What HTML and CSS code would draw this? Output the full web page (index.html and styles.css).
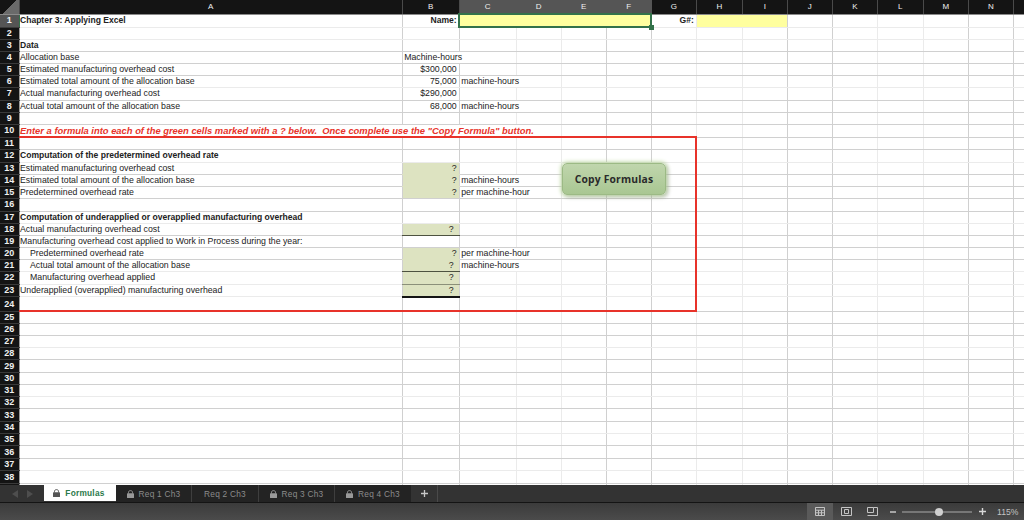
FILE: index.html
```html
<!DOCTYPE html>
<html lang="en">
<head>
    <meta charset="UTF-8">
    <title>Chapter 3: Applying Excel</title>
    <link rel="stylesheet" href="styles.css">
</head>
<body>
    <div class="sheet">
        <table class="grid">
            <colgroup>
                <col class="c-head">
                <col class="c-a"><col class="c-b"><col class="c-c"><col class="c-d"><col class="c-e"><col class="c-f"><col class="c-g">
                <col class="c-h"><col class="c-i"><col class="c-j"><col class="c-k"><col class="c-l"><col class="c-m"><col class="c-n"><col class="c-o">
            </colgroup>
            <tr class="cols">
                <th class="corner"></th>
                <th>A</th><th>B</th><th class="hot">C</th><th class="hot">D</th><th class="hot">E</th><th class="hot">F</th><th>G</th>
                <th>H</th><th>I</th><th>J</th><th>K</th><th>L</th><th>M</th><th>N</th><th></th>
            </tr>
            <tr class="tall soft"><th class="hot">1</th><td class="bold">Chapter 3: Applying Excel</td><td class="bold num">Name:</td><td class="yellow selected" colspan="4"></td><td class="bold num">G#:</td><td class="yellow" colspan="2"></td><td></td><td></td><td></td><td></td><td></td><td></td></tr>
            <tr class="soft"><th>2</th><td></td><td></td><td></td><td></td><td></td><td></td><td></td><td></td><td></td><td></td><td></td><td></td><td></td><td></td><td></td></tr>
            <tr><th>3</th><td class="bold">Data</td><td></td><td></td><td></td><td></td><td></td><td></td><td></td><td></td><td></td><td></td><td></td><td></td><td></td><td></td></tr>
            <tr><th>4</th><td>Allocation base</td><td class="unit" colspan="2">Machine-hours</td><td></td><td></td><td></td><td></td><td></td><td></td><td></td><td></td><td></td><td></td><td></td></tr>
            <tr><th>5</th><td>Estimated manufacturing overhead cost</td><td class="num">$300,000</td><td></td><td></td><td></td><td></td><td></td><td></td><td></td><td></td><td></td><td></td><td></td><td></td><td></td></tr>
            <tr class="soft"><th>6</th><td>Estimated total amount of the allocation base</td><td class="num">75,000</td><td class="unit" colspan="2">machine-hours</td><td></td><td></td><td></td><td></td><td></td><td></td><td></td><td></td><td></td><td></td></tr>
            <tr class="tall"><th>7</th><td>Actual manufacturing overhead cost</td><td class="num">$290,000</td><td></td><td></td><td></td><td></td><td></td><td></td><td></td><td></td><td></td><td></td><td></td><td></td><td></td></tr>
            <tr><th>8</th><td>Actual total amount of the allocation base</td><td class="num">68,000</td><td class="unit" colspan="2">machine-hours</td><td></td><td></td><td></td><td></td><td></td><td></td><td></td><td></td><td></td><td></td></tr>
            <tr><th>9</th><td></td><td></td><td></td><td></td><td></td><td></td><td></td><td></td><td></td><td></td><td></td><td></td><td></td><td></td><td></td></tr>
            <tr class="tall"><th>10</th><td class="note" colspan="4">Enter a formula into each of the green cells marked with a ? below.&nbsp; Once complete use the "Copy Formula" button.</td><td></td><td></td><td></td><td></td><td></td><td></td><td></td><td></td><td></td><td></td><td></td></tr>
            <tr><th>11</th><td></td><td></td><td></td><td></td><td></td><td></td><td></td><td></td><td></td><td></td><td></td><td></td><td></td><td></td><td></td></tr>
            <tr class="tall soft"><th>12</th><td class="bold">Computation of the predetermined overhead rate</td><td></td><td></td><td></td><td></td><td></td><td></td><td></td><td></td><td></td><td></td><td></td><td></td><td></td><td></td></tr>
            <tr><th>13</th><td>Estimated manufacturing overhead cost</td><td class="green num">?</td><td></td><td></td><td></td><td></td><td></td><td></td><td></td><td></td><td></td><td></td><td></td><td></td><td></td></tr>
            <tr><th>14</th><td>Estimated total amount of the allocation base</td><td class="green num">?</td><td class="unit" colspan="2">machine-hours</td><td></td><td></td><td></td><td></td><td></td><td></td><td></td><td></td><td></td><td></td></tr>
            <tr><th>15</th><td>Predetermined overhead rate</td><td class="green num end">?</td><td class="unit" colspan="2">per machine-hour</td><td></td><td></td><td></td><td></td><td></td><td></td><td></td><td></td><td></td><td></td></tr>
            <tr class="tall"><th>16</th><td></td><td></td><td></td><td></td><td></td><td></td><td></td><td></td><td></td><td></td><td></td><td></td><td></td><td></td><td></td></tr>
            <tr class="soft"><th>17</th><td class="bold">Computation of underapplied or overapplied manufacturing overhead</td><td></td><td></td><td></td><td></td><td></td><td></td><td></td><td></td><td></td><td></td><td></td><td></td><td></td><td></td></tr>
            <tr><th>18</th><td>Actual manufacturing overhead cost</td><td class="green num acct rule-dark">?</td><td></td><td></td><td></td><td></td><td></td><td></td><td></td><td></td><td></td><td></td><td></td><td></td><td></td></tr>
            <tr><th>19</th><td>Manufacturing overhead cost applied to Work in Process during the year:</td><td></td><td></td><td></td><td></td><td></td><td></td><td></td><td></td><td></td><td></td><td></td><td></td><td></td><td></td></tr>
            <tr><th>20</th><td class="indent">Predetermined overhead rate</td><td class="green num">?</td><td class="unit" colspan="2">per machine-hour</td><td></td><td></td><td></td><td></td><td></td><td></td><td></td><td></td><td></td><td></td></tr>
            <tr class="soft"><th>21</th><td class="indent">Actual total amount of the allocation base</td><td class="green num acct rule-dark">?</td><td class="unit" colspan="2">machine-hours</td><td></td><td></td><td></td><td></td><td></td><td></td><td></td><td></td><td></td><td></td></tr>
            <tr class="tall soft"><th>22</th><td class="indent">Manufacturing overhead applied</td><td class="green num acct rule-mid">?</td><td></td><td></td><td></td><td></td><td></td><td></td><td></td><td></td><td></td><td></td><td></td><td></td><td></td></tr>
            <tr class="soft"><th>23</th><td>Underapplied (overapplied) manufacturing overhead</td><td class="green num acct rule-thick">?</td><td></td><td></td><td></td><td></td><td></td><td></td><td></td><td></td><td></td><td></td><td></td><td></td><td></td></tr>
            <tr class="row-24"><th>24</th><td></td><td></td><td></td><td></td><td></td><td></td><td></td><td></td><td></td><td></td><td></td><td></td><td></td><td></td><td></td></tr>
            <tr><th>25</th><td></td><td></td><td></td><td></td><td></td><td></td><td></td><td></td><td></td><td></td><td></td><td></td><td></td><td></td><td></td></tr>
            <tr><th>26</th><td></td><td></td><td></td><td></td><td></td><td></td><td></td><td></td><td></td><td></td><td></td><td></td><td></td><td></td><td></td></tr>
            <tr class="soft"><th>27</th><td></td><td></td><td></td><td></td><td></td><td></td><td></td><td></td><td></td><td></td><td></td><td></td><td></td><td></td><td></td></tr>
            <tr><th>28</th><td></td><td></td><td></td><td></td><td></td><td></td><td></td><td></td><td></td><td></td><td></td><td></td><td></td><td></td><td></td></tr>
            <tr class="tall"><th>29</th><td></td><td></td><td></td><td></td><td></td><td></td><td></td><td></td><td></td><td></td><td></td><td></td><td></td><td></td><td></td></tr>
            <tr><th>30</th><td></td><td></td><td></td><td></td><td></td><td></td><td></td><td></td><td></td><td></td><td></td><td></td><td></td><td></td><td></td></tr>
            <tr class="soft"><th>31</th><td></td><td></td><td></td><td></td><td></td><td></td><td></td><td></td><td></td><td></td><td></td><td></td><td></td><td></td><td></td></tr>
            <tr><th>32</th><td></td><td></td><td></td><td></td><td></td><td></td><td></td><td></td><td></td><td></td><td></td><td></td><td></td><td></td><td></td></tr>
            <tr class="tall"><th>33</th><td></td><td></td><td></td><td></td><td></td><td></td><td></td><td></td><td></td><td></td><td></td><td></td><td></td><td></td><td></td></tr>
            <tr class="soft"><th>34</th><td></td><td></td><td></td><td></td><td></td><td></td><td></td><td></td><td></td><td></td><td></td><td></td><td></td><td></td><td></td></tr>
            <tr><th>35</th><td></td><td></td><td></td><td></td><td></td><td></td><td></td><td></td><td></td><td></td><td></td><td></td><td></td><td></td><td></td></tr>
            <tr class="tall"><th>36</th><td></td><td></td><td></td><td></td><td></td><td></td><td></td><td></td><td></td><td></td><td></td><td></td><td></td><td></td><td></td></tr>
            <tr class="soft"><th>37</th><td></td><td></td><td></td><td></td><td></td><td></td><td></td><td></td><td></td><td></td><td></td><td></td><td></td><td></td><td></td></tr>
            <tr class="tall"><th>38</th><td></td><td></td><td></td><td></td><td></td><td></td><td></td><td></td><td></td><td></td><td></td><td></td><td></td><td></td><td></td></tr>
            <tr><th></th><td></td><td></td><td></td><td></td><td></td><td></td><td></td><td></td><td></td><td></td><td></td><td></td><td></td><td></td><td></td></tr>
        </table>
        <div class="red-box"></div>
        <div class="copy-btn">Copy Formulas</div>
    </div>

    <div class="tabbar">
        <div class="tab-nav">
            <svg width="6" height="8" viewBox="0 0 6 8"><path d="M6 0V8L0 4Z" fill="#4e4e4e"/></svg>
            <svg width="6" height="8" viewBox="0 0 6 8"><path d="M0 0V8L6 4Z" fill="#4e4e4e"/></svg>
        </div>
        <div class="tab tab-active">
            <svg class="lock" viewBox="0 0 7 8"><path d="M1.5 3.5V2.3C1.5 1.2 2.4.6 3.5.6S5.5 1.2 5.5 2.3V3.5" fill="none" stroke="#555" stroke-width="1"/><rect y="3.3" width="7" height="4.7" rx=".6" fill="#555"/></svg>
            Formulas
        </div>
        <div class="tab tab-1">
            <svg class="lock" viewBox="0 0 7 8"><path d="M1.5 3.5V2.3C1.5 1.2 2.4.6 3.5.6S5.5 1.2 5.5 2.3V3.5" fill="none" stroke="#999" stroke-width="1"/><rect y="3.3" width="7" height="4.7" rx=".6" fill="#999"/></svg>
            Req 1 Ch3
        </div>
        <div class="tab tab-2">Req 2 Ch3</div>
        <div class="tab tab-3">
            <svg class="lock" viewBox="0 0 7 8"><path d="M1.5 3.5V2.3C1.5 1.2 2.4.6 3.5.6S5.5 1.2 5.5 2.3V3.5" fill="none" stroke="#999" stroke-width="1"/><rect y="3.3" width="7" height="4.7" rx=".6" fill="#999"/></svg>
            Req 3 Ch3
        </div>
        <div class="tab tab-4">
            <svg class="lock" viewBox="0 0 7 8"><path d="M1.5 3.5V2.3C1.5 1.2 2.4.6 3.5.6S5.5 1.2 5.5 2.3V3.5" fill="none" stroke="#999" stroke-width="1"/><rect y="3.3" width="7" height="4.7" rx=".6" fill="#999"/></svg>
            Req 4 Ch3
        </div>
        <div class="tab-add">
            <svg width="7" height="7" viewBox="0 0 7 7"><path d="M3.5 0V7M0 3.5H7" stroke="#c8c8c8" stroke-width="1.3"/></svg>
        </div>
    </div>

    <div class="statusbar">
        <div class="view view-on">
            <svg width="10" height="9" viewBox="0 0 10 9" fill="none" stroke="#c4c4c4"><path d="M.5.5H9.5V8.5H.5ZM.5 3.2H9.5M.5 5.8H9.5M3.5 3.2V8.5M6.5 3.2V8.5"/></svg>
        </div>
        <div class="view">
            <svg width="11" height="9" viewBox="0 0 11 9" fill="none" stroke="#c4c4c4"><path d="M.5.5H10.5V8.5H.5ZM3.5 2.5H7.5V6.5H3.5Z"/></svg>
        </div>
        <div class="view">
            <svg width="11" height="9" viewBox="0 0 11 9" fill="none" stroke="#c4c4c4"><path d="M.5 5.5V.5H6.5M6.5 .5V5.5H.5M.5 8.5H10.5V.5H6.5"/></svg>
        </div>
        <svg class="zoom-minus" width="6" height="2" viewBox="0 0 6 2"><path d="M0 1H6" stroke="#d0d0d0" stroke-width="1.4"/></svg>
        <div class="slider"><div class="thumb"></div></div>
        <svg class="zoom-plus" width="7" height="7" viewBox="0 0 7 7"><path d="M3.5 0V7M0 3.5H7" stroke="#d8d8d8" stroke-width="1.4"/></svg>
        <div class="zoom-pct">115%</div>
    </div>
</body>
</html>
```

FILE: styles.css
```css
:root {
    --line: #d0d0d0;
    --line-soft: #ebebeb;
    --head: #141414;
    --head-hot: #555;
    --green-cell: #dde3c1;
    --yellow-cell: #ffff9f;
}

html, body {
    margin: 0;
    height: 100%;
    overflow: hidden;
    background: #333;
}

body {
    font-family: "Liberation Sans", Arial, sans-serif;
}

.sheet {
    position: relative;
    height: 485px;
    overflow: hidden;
    background: white;
}

.grid {
    border-collapse: collapse;
    table-layout: fixed;
    width: 1040px;
    font-size: 8.75px;
    line-height: 11px;
    color: #222;
}

/* column widths and gridline shades */
.c-head { width: 19px; }
.c-a { width: 383px; border-right: 1px solid var(--line); }
.c-b { width: 57px; border-right: 1px solid var(--line); }
.c-c { width: 57px; border-right: 1px solid var(--line-soft); }
.c-d { width: 45px; border-right: 1px solid var(--line-soft); }
.c-e { width: 45px; border-right: 1px solid var(--line); }
.c-f { width: 45px; border-right: 1px solid var(--line); }
.c-g { width: 45px; border-right: 1px solid var(--line-soft); }
.c-h { width: 46px; border-right: 1px solid var(--line-soft); }
.c-i { width: 45px; border-right: 1px solid var(--line); }
.c-j { width: 45px; border-right: 1px solid var(--line); }
.c-k { width: 45px; border-right: 1px solid var(--line-soft); }
.c-l { width: 46px; border-right: 1px solid var(--line-soft); }
.c-m { width: 45px; border-right: 1px solid var(--line); }
.c-n { width: 45px; border-right: 1px solid var(--line); }
.c-o { width: 26px; }

tr {
    height: 12px;
    border-bottom: 1px solid var(--line);
}

tr.tall { height: 13px; }
tr.soft { border-bottom-color: var(--line-soft); }
tr.row-24 { height: 15px; }

tr.cols {
    height: 14px;
    border-bottom: 1px solid #8a8a8a;
}

th {
    padding: 0;
    background: var(--head);
    color: #f0f0f0;
    font-size: 9px;
    font-weight: 700;
    text-align: center;
    border-right: 1px solid #9a9a9a;
    border-bottom: 1px solid #3a3a3a;
}

th.hot {
    background: var(--head-hot);
    border-right-color: #33724a;
}

.cols th {
    font-size: 8px;
    font-weight: 400;
    border-right: 1px solid #4a4a4a;
    border-bottom: 1px solid #8a8a8a;
}

.cols th.hot { border-right-color: var(--head-hot); }

th.corner {
    background: linear-gradient(135deg, var(--head) 50%, #6a6a6a 50%);
}

td {
    padding: 0 0 0 0.5px;
    white-space: nowrap;
    vertical-align: middle;
}

.bold {
    font-size: 8.55px;
    font-weight: 700;
}

.indent { padding-left: 10.5px; }
.unit { padding-left: 1.5px; }

.num {
    text-align: right;
    padding: 0 2px 0 0;
}

.acct { padding-right: 5px; }

.note {
    color: #e8332a;
    font-size: 9.4px;
    font-weight: 700;
    font-style: italic;
}

.green {
    background: var(--green-cell);
    border-bottom: 1px solid var(--green-cell);
}

.end { border-bottom-color: var(--line); }

td.rule-dark { border-bottom: 1px solid #4d5240; }
td.rule-mid { border-bottom: 1px solid #8b9079; }
td.rule-thick { border-bottom: 2px solid #141414; }

.yellow {
    background: var(--yellow-cell);
    border-bottom-color: var(--yellow-cell);
}

.selected {
    position: relative;
    outline: 2px solid #33724a;
    outline-offset: -1px;
}

.selected::after {
    content: "";
    position: absolute;
    right: -3px;
    bottom: -3px;
    width: 5px;
    height: 5px;
    background: #33724a;
}

.red-box {
    position: absolute;
    left: 19px;
    top: 136px;
    width: 676px;
    height: 172px;
    border: solid #e8332a;
    border-width: 2px 2px 2px 0;
}

.copy-btn {
    position: absolute;
    left: 562px;
    top: 163px;
    width: 104px;
    height: 32px;
    border: 1px solid #9cba85;
    border-radius: 5px;
    box-sizing: border-box;
    background: linear-gradient(to bottom, #c0d6ad, #a9c792);
    box-shadow: 0 0 4px 1px #bcd8a0, 2px 2px 4px rgba(0,0,0,0.25);
    display: flex;
    align-items: center;
    justify-content: center;
    font-family: "Open Sans", sans-serif;
    font-size: 10.3px;
    font-weight: 700;
    color: #2a2a2a;
    letter-spacing: 0.2px;
}

.tabbar {
    display: flex;
    height: 18px;
    background: #333;
    border-bottom: 1px solid #141414;
    box-sizing: border-box;
    font-size: 8.3px;
    letter-spacing: 0.25px;
    color: #8c8c8c;
}

.tab-nav {
    width: 44px;
    display: flex;
    align-items: center;
    justify-content: center;
    gap: 9px;
}

.tab {
    display: flex;
    align-items: center;
    justify-content: center;
    gap: 5px;
    background: #232323;
    border-right: 1px solid #3e3e3e;
    box-sizing: border-box;
}

.tab-active {
    width: 72px;
    height: 16px;
    padding-right: 2px;
    background: white;
    border-right: none;
    color: #2b7a4b;
    font-weight: 700;
}

.tab-1 { width: 76px; }
.tab-2 { width: 67px; }
.tab-3 { width: 76px; }
.tab-4 { width: 76px; border-right: none; }

.tab-add {
    width: 27px;
    display: flex;
    align-items: center;
    justify-content: center;
    border-right: 1px solid #4a4a4a;
    box-sizing: border-box;
}

.lock {
    width: 7px;
    height: 8px;
}

.statusbar {
    display: flex;
    align-items: center;
    height: 17px;
    padding-left: 807px;
    background: linear-gradient(to bottom, #3b3b3b, #4b4b4b);
    color: #c4c4c4;
    font-size: 8.6px;
}

.view {
    width: 26px;
    height: 17px;
    display: flex;
    align-items: center;
    justify-content: center;
}

.view-on { background: #5a5a5a; }

.zoom-minus { margin-left: 5px; }

.slider {
    position: relative;
    width: 70px;
    height: 2px;
    margin-left: 6px;
    background: #777;
}

.thumb {
    position: absolute;
    left: 33px;
    top: -3px;
    width: 8px;
    height: 8px;
    border-radius: 50%;
    background: #d0d0d0;
}

.zoom-plus { margin-left: 7px; }

.zoom-pct { margin-left: 11px; }
```
